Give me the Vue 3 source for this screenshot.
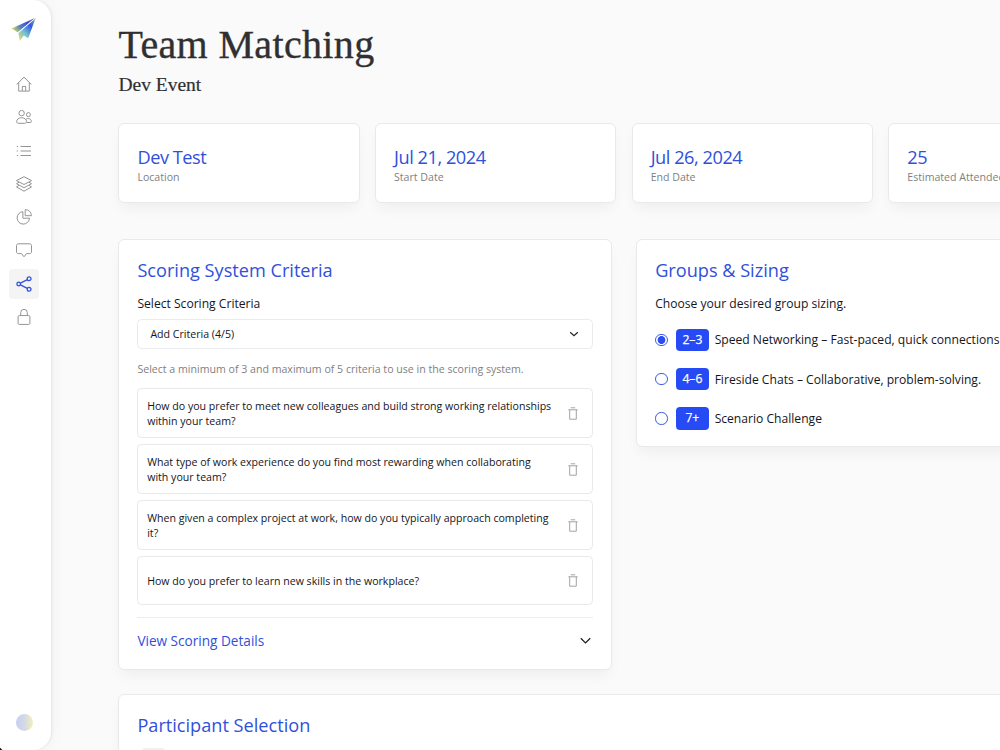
<script setup>
import { ref } from 'vue'

const stats = [
  { value: 'Dev Test', label: 'Location' },
  { value: 'Jul 21, 2024', label: 'Start Date' },
  { value: 'Jul 26, 2024', label: 'End Date' },
  { value: '25', label: 'Estimated Attendees' }
]

const criteria = ref([
  'How do you prefer to meet new colleagues and build strong working relationships within your team?',
  'What type of work experience do you find most rewarding when collaborating with your team?',
  'When given a complex project at work, how do you typically approach completing it?',
  'How do you prefer to learn new skills in the workplace?'
])

const sizes = [
  { range: '2–3', text: 'Speed Networking – Fast-paced, quick connections' },
  { range: '4–6', text: 'Fireside Chats – Collaborative, problem-solving.' },
  { range: '7+', text: 'Scenario Challenge' }
]
const selectedSize = ref('2–3')

const navItems = [
  { name: 'home', paths: ['M.6 8.5 8 1.2l7.4 7.3', 'M2.7 6.7v8.4h10.6V6.7', 'M6.3 15v-4.6h3.4V15'] },
  {
    name: 'people',
    paths: [
      'M5.6 1.4a2.7 2.7 0 1 1 0 5.4 2.7 2.7 0 0 1 0-5.4Z',
      'M5.6 8.7c2.8 0 5 1.8 5 4 0 1.2-.9 1.6-2 1.6h-6c-1.2 0-2-.4-2-1.6 0-2.2 2.2-4 5-4Z',
      'M12.4 3.6a2 2 0 1 1 0 4 2 2 0 0 1 0-4Z',
      'M10.2 10c2.8-1.3 5.2.4 5.2 2.4 0 .8-.6 1.1-1.3 1.1h-3.4'
    ]
  },
  { name: 'list', paths: ['M.8 3.5h1.2M.8 8h1.2M.8 12.5h1.2', 'M4.5 3.5H15M4.5 8H15M4.5 12.5H15'] },
  {
    name: 'layers',
    paths: [
      'm8 .7 7.5 3.9L8 8.5.5 4.6Z',
      'M3 6.2.5 7.7 8 11.7l7.5-4L13 6.2',
      'M3 9.3.5 10.9 8 15.2l7.5-4.3L13 9.3'
    ]
  },
  { name: 'chart', paths: ['M6.9 2.7a6.2 6.2 0 1 0 6.6 6.5H6.9Z', 'M9.2.6v6.1h6.2A6.1 6.1 0 0 0 9.2.6Z'] },
  { name: 'chat', paths: ['M2.3 1.8h11.4c1 0 1.8.7 1.8 1.7v6.4c0 1-.8 1.7-1.8 1.7h-3.2L8 14.8l-2.5-3.2H2.3c-1 0-1.8-.7-1.8-1.7V3.5c0-1 .8-1.7 1.8-1.7Z'] },
  {
    name: 'share',
    paths: [
      'M2.7 6.2a1.8 1.8 0 1 1 0 3.6 1.8 1.8 0 0 1 0-3.6Z',
      'M13.1.8a1.9 1.9 0 1 1 0 3.8 1.9 1.9 0 0 1 0-3.8Z',
      'M13.1 11.4a1.9 1.9 0 1 1 0 3.8 1.9 1.9 0 0 1 0-3.8Z',
      'm4.4 7.1 7-3.5M4.4 8.9l7 3.5'
    ]
  },
  { name: 'lock', paths: ['M3.2 6.6h9.6c.7 0 1.1.4 1.1 1.1v6.6c0 .7-.4 1.1-1.1 1.1H3.2c-.7 0-1.1-.4-1.1-1.1V7.7c0-.7.4-1.1 1.1-1.1Z', 'M4.7 6.4V3.6a3.3 3.3 0 0 1 6.6 0v2.8'] }
]
const activeNav = ref('share')

const removeCriterion = (index) => {
  criteria.value.splice(index, 1)
}
</script>

<template>
  <div class="page">
    <aside class="sidebar">
      <svg class="logo" viewBox="0 0 26 26">
        <defs>
          <linearGradient id="wing" x1="0" y1="0.6" x2="1" y2="0.2">
            <stop offset="0" stop-color="#c3d267" />
            <stop offset="0.3" stop-color="#5583bd" />
            <stop offset="0.65" stop-color="#4449dc" />
            <stop offset="1" stop-color="#6660a0" />
          </linearGradient>
          <linearGradient id="body" x1="0" y1="1" x2="0.8" y2="0">
            <stop offset="0" stop-color="#e6e75c" />
            <stop offset="0.4" stop-color="#74bfd2" />
            <stop offset="0.75" stop-color="#3355e8" />
            <stop offset="1" stop-color="#77a8a4" />
          </linearGradient>
        </defs>
        <path d="M.6 11.6 24.4.8 6.6 15.2Z" fill="url(#wing)" />
        <path d="M24.7.9 17.2 21.2l-4.4-2.7-4 5.4-1.5-7.9Z" fill="url(#body)" />
        <path d="M24.2 1.2 7.2 15.8" fill="none" stroke="#eef6fa" stroke-width="1" />
      </svg>

      <nav class="nav">
        <button
          v-for="item in navItems"
          :key="item.name"
          :class="['nav-item', { active: activeNav === item.name }]"
          @click="activeNav = item.name"
        >
          <svg viewBox="0 0 16 16">
            <path v-for="d in item.paths" :key="d" :d="d" />
          </svg>
        </button>
      </nav>

      <div class="avatar"></div>
    </aside>

    <main class="content">
      <h1>Team Matching</h1>
      <p class="subtitle">Dev Event</p>

      <div class="stats">
        <div v-for="stat in stats" :key="stat.label" class="card stat">
          <div class="stat-value">{{ stat.value }}</div>
          <div class="stat-label">{{ stat.label }}</div>
        </div>
      </div>

      <div class="columns">
        <section class="card panel scoring">
          <h2>Scoring System Criteria</h2>
          <p class="lead">Select Scoring Criteria</p>
          <button class="select">
            <span>Add Criteria ({{ criteria.length }}/5)</span>
            <svg class="chevron" viewBox="0 0 10 10"><path d="m1.2 3.3 3.8 3.5 3.8-3.5" /></svg>
          </button>
          <p class="hint">Select a minimum of 3 and maximum of 5 criteria to use in the scoring system.</p>

          <ul class="criteria">
            <li v-for="(item, index) in criteria" :key="item">
              <span>{{ item }}</span>
              <button class="trash" @click="removeCriterion(index)">
                <svg viewBox="0 0 10 13"><path d="M2.8.8h4.4M.4 2.8h9.2M1.7 2.8v9.4h6.6V2.8" /></svg>
              </button>
            </li>
          </ul>

          <div class="details">
            <span>View Scoring Details</span>
            <svg class="chevron" viewBox="0 0 10 10"><path d="M.7 3 5 7.2 9.3 3" /></svg>
          </div>
        </section>

        <section class="card panel">
          <h2>Groups &amp; Sizing</h2>
          <p class="lead">Choose your desired group sizing.</p>
          <div class="sizes">
            <label v-for="size in sizes" :key="size.range" class="size">
              <input v-model="selectedSize" type="radio" name="size" :value="size.range" />
              <span class="badge">{{ size.range }}</span>
              <span>{{ size.text }}</span>
            </label>
          </div>
        </section>
      </div>

      <section class="card panel participants">
        <h2>Participant Selection</h2>
        <div class="tab"></div>
      </section>
    </main>
  </div>
</template>

<style>
body {
  margin: 0;
  overflow: hidden;
  background: #fafafa;
}
</style>

<style scoped>
* {
  box-sizing: border-box;
}

.page {
  display: flex;
  width: 1000px;
  height: 750px;
  overflow: hidden;
  color: #14161c;
  background: #fafafa;
  font-family: "Open Sans", "Noto Sans", sans-serif;
}

h1,
h2,
p,
ul {
  margin: 0;
  padding: 0;
}

button {
  padding: 0;
  border: 0;
  color: inherit;
  background: none;
  font-family: inherit;
}

/* Sidebar */
.sidebar {
  display: flex;
  flex: none;
  flex-direction: column;
  align-items: center;
  width: 51px;
  height: 750px;
  padding: 17px 2.4px 19px 0;
  border-radius: 0 18px 18px 0;
  background: linear-gradient(45deg, #111 1.2px, transparent 2.2px), #fff;
  box-shadow: 1px 0 3px rgba(0, 0, 0, 0.07), 3px 0 14px rgba(0, 0, 0, 0.03);
}

.logo {
  width: 26px;
  height: 26px;
}

.nav {
  display: flex;
  flex-direction: column;
  gap: 3.3px;
  margin-top: 26px;
}

.nav-item {
  display: flex;
  align-items: center;
  justify-content: center;
  width: 30px;
  height: 30px;
  border-radius: 4px;
}

.nav-item svg {
  width: 16px;
  height: 16px;
  fill: none;
  stroke: #949494;
  stroke-width: 1;
}

.nav-item.active {
  background: #f4f4f4;
}

.nav-item.active svg {
  stroke: #3452dc;
  stroke-width: 1.3;
}

.avatar {
  width: 17px;
  height: 17px;
  margin-top: auto;
  border-radius: 50%;
  background: linear-gradient(90deg, #c6cff5, #d4d9e6 50%, #f1efb9);
}

/* Content */
.content {
  flex: none;
  width: 1011px;
  margin-left: 67.4px;
  padding-top: 20px;
}

h1 {
  height: 50px;
  color: #303032;
  font-family: "Liberation Serif", serif;
  font-size: 40px;
  font-weight: 400;
  letter-spacing: 0.35px;
  line-height: 50px;
  -webkit-text-stroke: 0.35px #303032;
}

.subtitle {
  height: 28px;
  color: #303032;
  font-family: "Liberation Serif", serif;
  font-size: 19.5px;
  line-height: 29px;
  -webkit-text-stroke: 0.2px #303032;
}

.card {
  border: 1px solid #e8e9ea;
  border-radius: 6px;
  background: #fff;
  box-shadow: 0 8px 14px -3px rgba(0, 0, 0, 0.05);
}

.stats {
  display: grid;
  grid-template-columns: repeat(4, 1fr);
  gap: 15.5px;
  margin-top: 24.5px;
}

.stat {
  height: 80.5px;
  padding: 21px 18px 0;
}

.stat-value {
  color: #3050dc;
  font-size: 18.2px;
  letter-spacing: -0.46px;
  line-height: 24px;
}

.stat-label {
  color: #7f7f7f;
  font-size: 10.6px;
  line-height: 17px;
}

.columns {
  display: grid;
  grid-template-columns: 1fr 1fr;
  align-items: start;
  gap: 24.5px;
  margin-top: 36px;
}

.panel {
  padding: 18px 18px 16px;
}

h2 {
  color: #3050dc;
  font-size: 18.15px;
  font-weight: 400;
  line-height: 25px;
}

.lead {
  margin-top: 12px;
  font-size: 12.12px;
  line-height: 18px;
}

.scoring {
  height: 430.5px;
}

.select {
  display: flex;
  align-items: center;
  justify-content: space-between;
  width: 100%;
  height: 30.5px;
  margin-top: 5.5px;
  padding: 0 13px 0 12px;
  border: 1px solid #e8ecef;
  border-radius: 4.5px;
  font-size: 10.6px;
}

.chevron {
  width: 10px;
  height: 10px;
  fill: none;
  stroke: #222;
  stroke-width: 1.2;
}

.hint {
  margin-top: 12px;
  color: #7f7f7f;
  font-size: 10.6px;
  line-height: 16px;
}

.criteria {
  display: flex;
  flex-direction: column;
  gap: 6px;
  margin-top: 11px;
  list-style: none;
}

.criteria li {
  display: flex;
  align-items: center;
  justify-content: space-between;
  height: 50px;
  padding: 0 13.9px 0 8.8px;
  border: 1px solid #e8e9ea;
  border-radius: 4.5px;
  font-size: 10.6px;
  line-height: 15.2px;
}

.criteria li span {
  width: 406px;
  padding-top: 1.5px;
}

.criteria li:last-child {
  height: 49px;
}

.trash {
  display: flex;
}

.trash svg {
  width: 10px;
  height: 13px;
  fill: none;
  stroke: #999;
  stroke-width: 0.9;
}

.details {
  display: flex;
  align-items: center;
  justify-content: space-between;
  margin-top: 12px;
  padding: 12.5px 2px 0 0;
  border-top: 1px solid #e9eef0;
  color: #3050dc;
  font-size: 13.6px;
  line-height: 20px;
}

.details .chevron {
  width: 11px;
  height: 11px;
}

/* Group sizes */
.sizes {
  display: flex;
  flex-direction: column;
  gap: 16.3px;
  margin-top: 15.3px;
}

.size {
  display: flex;
  align-items: center;
  height: 23px;
  font-size: 12.12px;
  white-space: nowrap;
}

.size input {
  width: 12.4px;
  height: 12.4px;
  margin: 0 8.6px 0 0;
  border: 1px solid #3c5ce6;
  border-radius: 50%;
  appearance: none;
  background: #fff;
}

.size input:checked {
  background: radial-gradient(circle, #2a4df0 3.6px, #fff 4.2px);
}

.badge {
  width: 32.5px;
  height: 22.5px;
  margin-right: 6px;
  border-radius: 4px;
  color: #fff;
  background: #264bf4;
  font-weight: 500;
  line-height: 22.5px;
  text-align: center;
  -webkit-text-stroke: 0.25px #fff;
}

.participants {
  height: 200px;
  margin-top: 24.5px;
}

.tab {
  width: 23px;
  height: 23px;
  margin: 10px 0 0 5px;
  border-radius: 3px;
  background: #f0f0f0;
}
</style>
